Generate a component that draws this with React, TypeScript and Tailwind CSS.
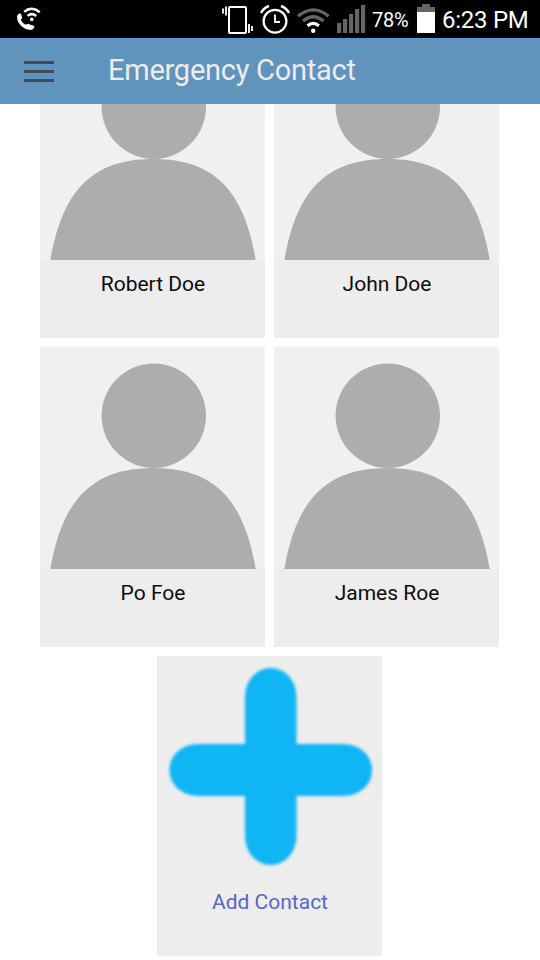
import React from "react";

function StatusBar() {
  return (
    <div className="flex h-[38px] w-full shrink-0 items-start bg-black text-white">
      <svg className="ml-[14px] mt-[4px]" width="30" height="30" viewBox="14 4 30 30" fill="none">
        <path d="M17 17c0-2 1.400-3.400 2.800-3.600.8-.1 1.400.5 1.600 1.400l.7 2.700c.2 1-.8 1.600-1.200 2.300.9 2.300 2.500 4 4.800 5 .8-.4 1.500-1.100 2.500-.8l5 1.600c1.200.4 1.400 1.500.8 2.300-1 1.500-2.600 2.300-4.700 1.900C22.300 28.700 17 22.800 17 17Z" fill="#fff" />
        <path d="M24.200 11.900c4.700-4.200 10.600-4 15.500.3M27.600 15.900c2.700-2.400 5.700-2.300 8.600 0" stroke="#fff" strokeWidth="2.500" />
        <circle cx="31.800" cy="19.400" r="1.800" fill="#fff" />
      </svg>
      <svg className="ml-[176px]" width="150" height="38" viewBox="220 0 150 38" fill="none" stroke="#fff">
        <rect x="229" y="7" width="17" height="26" rx="1" strokeWidth="2" />
        <path d="M223 8.500v5M226 6.500v9M249 24v9M252 26v5" strokeWidth="1.800" />
        <circle cx="275" cy="21.200" r="11.400" strokeWidth="2.200" />
        <path d="M275 14.500v7.500h5" strokeWidth="1.800" />
        <path d="M261 13q2.500-5 8-7M289 13q-2.500-5-8-7" strokeWidth="2.400" />
        <path d="M298 16.200q15.300-12.800 30.600 0M303 21q10.300-8.500 20.600 0" stroke="#666" strokeWidth="3.200" />
        <path d="M307.500 25.800q5.700-4.800 11.400 0" strokeWidth="3.200" />
        <circle cx="313.200" cy="30.700" r="2.200" fill="#fff" stroke="none" />
        <path d="M337 23h4.200v10H337zM343 19h4.200v14H343zM349 14h4.200v19H349zM355 9h4.200v24H355zM361 5h4.200v28H361z" fill="#666" stroke="none" />
      </svg>
      <span className="ml-[2px] mt-[7px] w-[45px] whitespace-nowrap text-[20px] leading-[26px] tracking-[-0.3px]">78%</span>
      <svg width="18" height="29" viewBox="0 0 18 29" className="mt-[4px]">
        <path d="M0 3h5V0h8v3h5v5H0z" fill="#666" />
        <path d="M0 8h18v21H0z" fill="#fff" />
      </svg>
      <span className="ml-[7px] mt-[5px] whitespace-nowrap text-[24px] leading-[30px] tracking-[-0.25px]">6:23 PM</span>
    </div>
  );
}

function Header() {
  return (
    <header className="flex h-[66px] w-full shrink-0 items-start border-t border-[#5798cd] bg-[#6094bd]">
      <button aria-label="Menu" className="ml-[24px] mt-[22px] flex w-[30px] flex-col gap-[6px]">
        <span className="h-[3px] bg-[#3d4d5c]" />
        <span className="h-[3px] bg-[#3d4d5c]" />
        <span className="h-[3px] bg-[#3d4d5c]" />
      </button>
      <h1 className="ml-[54px] mt-[13px] whitespace-nowrap text-[29px] leading-[36px] tracking-[-0.25px] text-[#ececec]">Emergency Contact</h1>
    </header>
  );
}

function Card({ name, link = false, children }: { name: string; link?: boolean; children: React.ReactNode }) {
  return (
    <div className="flex h-[300px] w-[225px] shrink-0 flex-col items-center bg-[#ededed]">
      {children}
      <div className={link ? "mt-[11px] pl-px text-[21px] leading-[26px] text-[#5468c8]" : "mt-[11px] pl-px text-[21px] leading-[26px] text-[#0c0c0c]"}>{name}</div>
    </div>
  );
}

function Person() {
  return (
    <svg width="225" height="222" viewBox="0 0 225 222" className="block shrink-0 bg-[#f0f0f0]" fill="#adadad">
      <circle cx="113.800" cy="68.700" r="52.200" />
      <path d="M10.300 222C22 155 50 121 113.300 121S204 155 215.700 222Z" />
    </svg>
  );
}

function Plus() {
  return (
    <svg width="225" height="222" viewBox="0 0 225 222" className="block shrink-0" fill="#0fb5f5">
      <g className="blur-[1.8px]">
        <path d="M88 41C88 24 100 12 113.800 12S139.500 24 139.500 41V88H185C203 88 215 99 215 114S203 140 185 140H139.500V180C139.500 197 127.500 209 113.800 209S88 197 88 180V140H42C24 140 12.500 128 12.500 114S24 88 42 88H88Z" />
      </g>
    </svg>
  );
}

export default function App() {
  return (
    <div className="flex h-[960px] w-[540px] flex-col overflow-hidden bg-white font-[Roboto,'Liberation_Sans',sans-serif]">
      <StatusBar />
      <Header />
      <main className="flex min-h-0 flex-1 flex-col overflow-hidden">
        <div className="-mt-[66px] flex w-[540px] flex-wrap content-start gap-[9px] pl-[40px]">
          <Card name="Robert Doe"><Person /></Card>
          <Card name="John Doe"><Person /></Card>
          <Card name="Po Foe"><Person /></Card>
          <Card name="James Roe"><Person /></Card>
          <div className="flex w-[459px] justify-center">
            <Card name="Add Contact" link><Plus /></Card>
          </div>
        </div>
      </main>
    </div>
  );
}
